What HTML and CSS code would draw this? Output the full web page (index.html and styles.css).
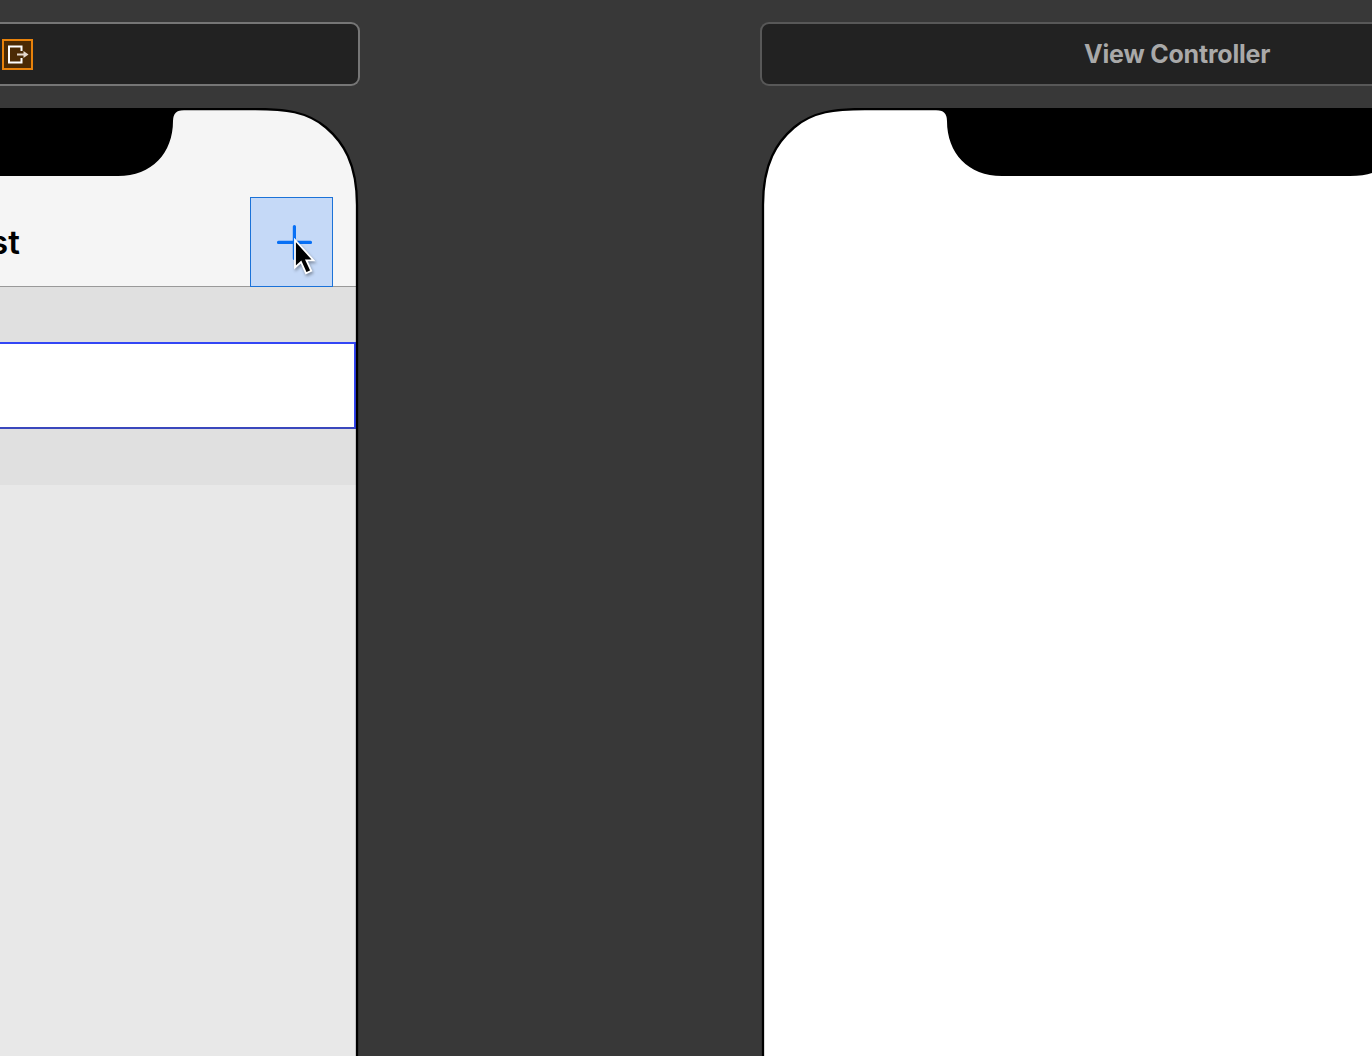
FILE: index.html
```html
<!DOCTYPE html>
<html lang="en">
<head>
<meta charset="utf-8">
<title>Storyboard</title>
<link rel="stylesheet" href="styles.css">
</head>
<body>
<main class="canvas">
  <section class="scene scene-list">
    <header class="scene-bar selected">
      <svg class="exit-icon" width="31" height="31" viewBox="0 0 31 31">
        <rect x="1" y="1" width="29" height="29" fill="#4b2a04" stroke="#e8820b" stroke-width="2"/>
        <path d="M19.5 12V7.5H7v16h12.5V19" fill="none" stroke="#fff" stroke-width="2"/>
        <path d="M15 15.5h8" stroke="#e5d8cc" stroke-width="2"/>
        <path d="M21.5 12l5 3.5-5 3.5z" fill="#e5d8cc"/>
      </svg>
    </header>
    <div class="device">
      <div class="screen">
        <div class="nav-bar">
          <h1 class="nav-title">st</h1>
          <div class="add-button">
            <svg width="81" height="88" viewBox="0 0 81 88">
              <path d="M43.4 28.5v32M27.5 44.4h32" stroke="#0870f5" stroke-width="3.2" stroke-linecap="round"/>
            </svg>
          </div>
        </div>
        <div class="section-header"></div>
        <div class="cell"></div>
        <div class="section-footer"></div>
      </div>
      <svg class="frame" width="360" height="948" viewBox="0 108 360 948">
        <path d="M255 108H360V215H357V205C357 163 343 142 326 127.5C307 111.5 285 109 255 109z" fill="#383838"/>
        <path d="M-2 109H255C285 109 307 111.5 326 127.5C343 142 357 163 357 205V1060" fill="none" stroke="#000" stroke-width="2.3"/>
        <path d="M0 108H190V110H184Q173 110 173 121C173 153 152 176 118 176H0z"/>
      </svg>
      <svg class="cursor" width="30" height="42" viewBox="0 0 30 42">
        <path d="M3 2V29.5L9 24L14 35.2L19.3 32.8L14.4 22.4H21.5z" fill="#000" stroke="#fff" stroke-width="1.8"/>
      </svg>
    </div>
  </section>
  <section class="scene scene-detail">
    <header class="scene-bar">
      <span class="scene-title">View Controller</span>
    </header>
    <div class="device">
      <div class="screen blank"></div>
      <svg class="frame" width="612" height="948" viewBox="760 108 612 948">
        <path d="M865 108H760V215H763V205C763 163 777 142 794 127.5C813 111.5 835 109 865 109z" fill="#383838"/>
        <path d="M1374 109H865C835 109 813 111.5 794 127.5C777 142 763 163 763 205V1060" fill="none" stroke="#000" stroke-width="2.3"/>
        <path d="M1372 108H930V110H936Q947 110 947 121C947 153 968 176 1002 176H1350Q1364 176 1372 173z"/>
      </svg>
    </div>
  </section>
</main>
</body>
</html>
```
FILE: styles.css
```css
* { box-sizing: border-box; }
body {
  margin: 0;
  background: #383838;
  font-family: Inter, "Liberation Sans", sans-serif;
}
.canvas {
  display: flex;
  gap: 400px;
  width: 1372px;
  height: 1056px;
  padding-top: 22px;
  overflow: hidden;
}
.scene {
  display: flex;
  flex-direction: column;
  gap: 22px;
  flex: none;
}
.scene-list { width: 360px; }
.scene-detail { width: 612px; }
.scene-bar {
  display: flex;
  align-items: center;
  height: 64px;
  flex: none;
  border: 2px solid #585858;
  border-right: 0;
  border-radius: 9px 0 0 9px;
  background: #222;
}
.scene-bar.selected {
  padding: 1px 0 0 2px;
  border: 2px solid #767676;
  border-left: 0;
  border-radius: 0 9px 9px 0;
}
.scene-title {
  margin-left: 322px;
  color: #a9a9a9;
  font-size: 25px;
  font-weight: 700;
  line-height: 30px;
  letter-spacing: -0.2px;
  white-space: nowrap;
}
.device {
  position: relative;
  flex: 1;
}
.screen {
  display: flex;
  flex-direction: column;
  width: 356px;
  height: 100%;
  background: #e8e8e8;
}
.screen.blank {
  width: auto;
  margin-left: 4px;
  background: #fff;
}
.nav-bar {
  display: flex;
  justify-content: space-between;
  align-items: flex-end;
  height: 179px;
  padding-right: 23px;
  border-bottom: 1px solid #999;
  background: #f5f5f5;
}
.nav-title {
  margin: 0 0 24px -10px;
  font-size: 33px;
  font-weight: 600;
  line-height: 40px;
}
.add-button {
  width: 83px;
  height: 90px;
  margin-bottom: -1px;
  border: 1px solid #1b72d8;
  background: #c5d9f7;
}
.add-button svg { display: block; }
.section-header { height: 55px; background: #e0e0e0; }
.cell {
  height: 87px;
  border: 2px solid #3346f5;
  border-left: 0;
  border-bottom-color: #3a47bd;
  background: #fff;
}
.section-footer { height: 56px; background: #e0e0e0; }
.frame {
  position: absolute;
  top: 0;
  left: 0;
}
.cursor {
  position: absolute;
  top: 130px;
  left: 292px;
  filter: drop-shadow(1px 2px 1.5px rgba(0, 0, 0, 0.35));
}
```
